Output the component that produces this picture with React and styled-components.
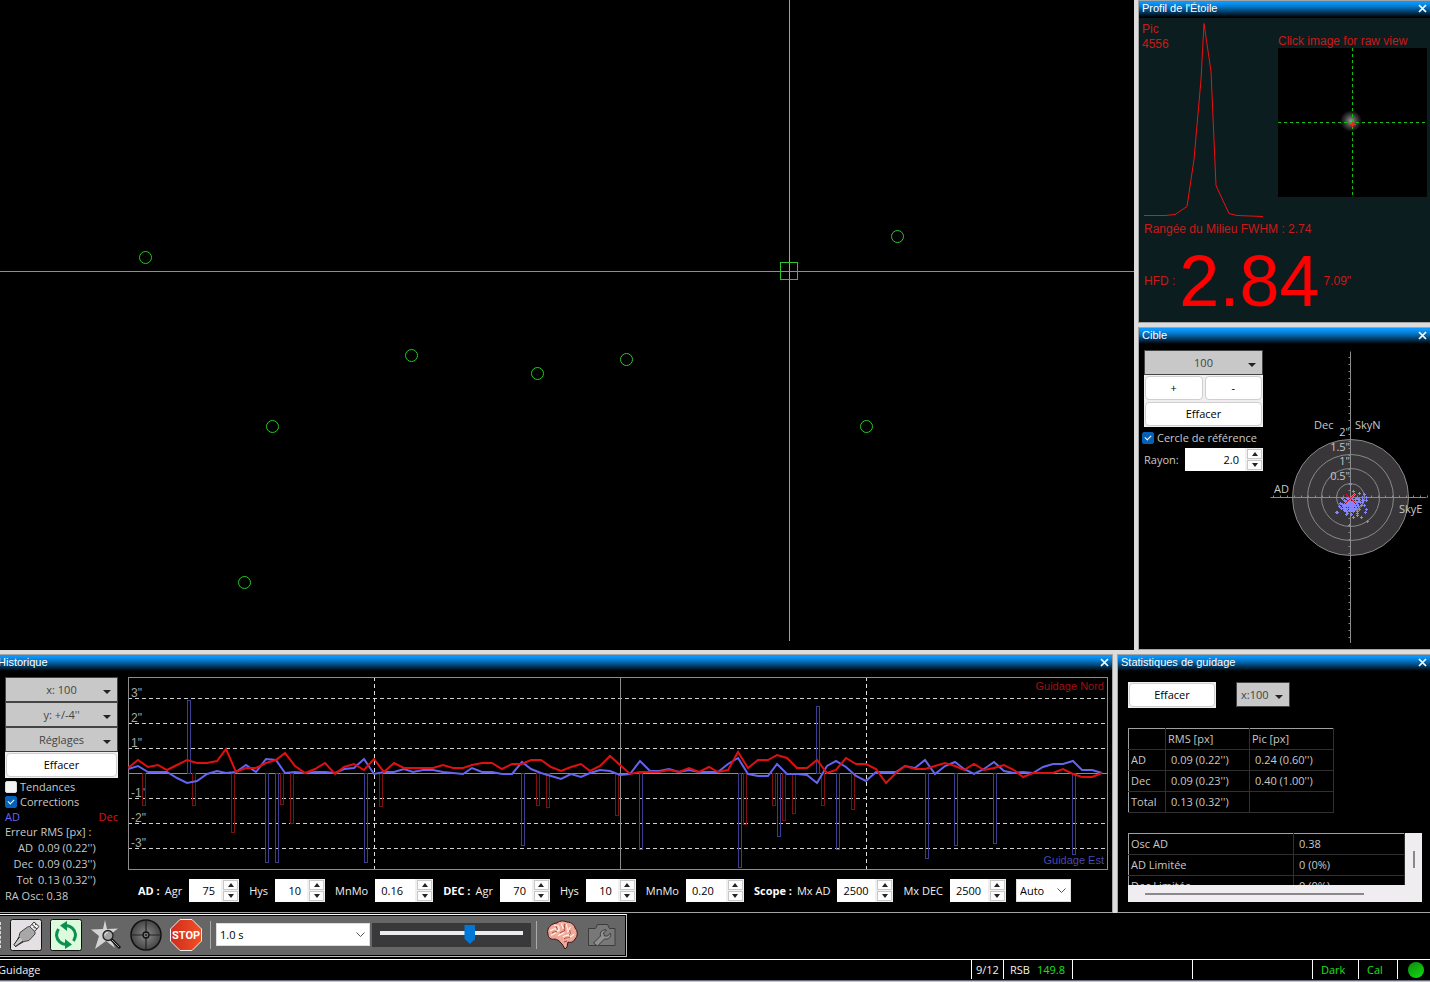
import styled, { createGlobalStyle } from "styled-components";

const GlobalStyle = createGlobalStyle`
  * {
    box-sizing: border-box;
  }
  body {
    margin: 0;
    background: #000;
    color: #c8c8c8;
    font-family: "Open Sans", "Noto Sans", sans-serif;
    font-size: 11px;
    line-height: 16px;
  }
  button, input, select {
    font: inherit;
    margin: 0;
    border-radius: 0;
  }
`;

const Window = styled.div`
  min-height: 100vh;
  display: flex;
  flex-direction: column;
  border-bottom: 1px solid #c4c4cc;
`;

const Docks = styled.div`
  flex: 1;
  display: flex;
  flex-direction: column;
  gap: 4px;
  background: #dcdcdc;
`;

const DockRow = styled.div`
  flex: ${(props) => (props.$grow ? 1 : "none")};
  display: flex;
  gap: 4px;
`;

const SideColumn = styled.div`
  width: 292px;
  display: flex;
  flex-direction: column;
  gap: 4px;
`;

const Sky = styled.svg`
  flex: 1;
  min-width: 0;
  background: #000;
`;

const PanelBox = styled.section`
  flex: ${(props) => (props.$width ? "none" : 1)};
  width: ${(props) => props.$width || "auto"};
  min-width: 0;
  display: flex;
  flex-direction: column;
  background: ${(props) => props.$bg || "#000"};
  border: 1px solid #a4a4a4;
  border-left-width: ${(props) => (props.$edge === "left" ? 0 : "1px")};
  border-right-width: ${(props) => (props.$edge === "left" ? "1px" : 0)};
`;

const TitleBar = styled.header`
  height: 17px;
  flex: none;
  display: flex;
  align-items: center;
  justify-content: space-between;
  padding: 0 3px 3px;
  padding-left: ${(props) => (props.$edge === "left" ? 0 : "3px")};
  text-indent: ${(props) => (props.$edge === "left" ? "-2px" : 0)};
  background: linear-gradient(#0a96fa 10%, #0574c4 35%, #000 95%);
`;

const Title = styled.h2`
  margin: 0;
  color: #fff;
  font-family: "Liberation Sans", Arial, sans-serif;
  font-size: 11px;
  font-weight: 400;
  line-height: 16px;
`;

const CloseButton = styled.button`
  width: 9px;
  height: 9px;
  padding: 0;
  border: 0;
  background: none;
  svg {
    display: block;
  }
`;

const Panel = ({ title, edge, bg, width, children }) => (
  <PanelBox $edge={edge} $bg={bg} $width={width}>
    <TitleBar $edge={edge}>
      <Title>{title}</Title>
      <CloseButton aria-label="Fermer">
        <svg width="9" height="9" viewBox="0 0 9 9">
          <path d="M1 1l7 7M8 1l-7 7" stroke="#fff" strokeWidth="1.7" />
        </svg>
      </CloseButton>
    </TitleBar>
    {children}
  </PanelBox>
);

/* shared controls */

const PushFrame = styled.button`
  display: flex;
  height: 26px;
  width: ${(props) => props.$width || "auto"};
  flex: ${(props) => (props.$grow ? 1 : "none")};
  padding: 1px;
  color: #000;
  background: #f0eef0;
  border: 0;
`;

const PushFace = styled.span`
  flex: 1;
  height: 24px;
  line-height: 22px;
  background: #fff;
  border: 1px solid #d0ced0;
  border-radius: 4px;
`;

const PushButton = ({ width, grow, children }) => (
  <PushFrame $width={width} $grow={grow}>
    <PushFace>{children}</PushFace>
  </PushFrame>
);

const MenuBox = styled.span`
  display: grid;
  align-items: center;
  width: ${(props) => props.$width || "auto"};
  height: 25px;
  background: #c8c8c8;
  border: 1px solid #444;
  svg {
    grid-area: 1 / 1;
    justify-self: end;
    margin: 5px 6px 0 0;
    pointer-events: none;
  }
`;

const MenuSelect = styled.select`
  grid-area: 1 / 1;
  width: 100%;
  height: 23px;
  appearance: none;
  border: 0;
  padding: 0 4px;
  background: none;
  color: #444;
  text-align: ${(props) => props.$align || "center"};
  text-align-last: ${(props) => props.$align || "center"};
`;

const MenuButton = styled.button`
  grid-area: 1 / 1;
  height: 23px;
  border: 0;
  padding: 0;
  background: none;
  color: #444;
`;

const Triangle = () => (
  <svg width="8" height="4" viewBox="0 0 8 4">
    <path d="M0 0h8L4 4z" fill="#222" />
  </svg>
);

const Menu = ({ label, value, width, align }) => (
  <MenuBox $width={width}>
    <MenuSelect aria-label={label} $align={align}>
      <option>{value}</option>
    </MenuSelect>
    <Triangle />
  </MenuBox>
);

const ComboBox = styled.span`
  display: grid;
  align-items: center;
  width: ${(props) => props.$width};
  height: 23px;
  background: #fff;
  border: 1px solid #ddd;
  svg {
    grid-area: 1 / 1;
    justify-self: end;
    margin-right: 4px;
    pointer-events: none;
  }
`;

const ComboSelect = styled.select`
  grid-area: 1 / 1;
  width: 100%;
  height: 21px;
  appearance: none;
  border: 0;
  padding: 0 3px;
  background: none;
  color: #000;
`;

const Combo = ({ label, value, width }) => (
  <ComboBox $width={width}>
    <ComboSelect aria-label={label}>
      <option>{value}</option>
    </ComboSelect>
    <svg width="9" height="6" viewBox="0 0 9 6">
      <path d="M.5 .5l4 4 4-4" fill="none" stroke="#555" />
    </svg>
  </ComboBox>
);

const SpinBox = styled.span`
  display: flex;
  width: ${(props) => props.$width};
  height: 23px;
  background: #f0f0f0;
`;

const SpinInput = styled.input`
  flex: 1;
  min-width: 0;
  padding: 0 6px;
  border: 0;
  background: #fff;
  color: #000;
  text-align: ${(props) => props.$align || "right"};
`;

const SpinArrows = styled.span`
  width: 18px;
  display: flex;
  flex-direction: column;
  gap: 1px;
  padding: 1px 1px 1px 2px;
`;

const SpinArrow = styled.button`
  flex: 1;
  display: flex;
  align-items: center;
  justify-content: center;
  padding: 0;
  background: #fdfdfd;
  border: 1px solid #c8c8c8;
`;

const Spin = ({ id, value, width, align }) => (
  <SpinBox $width={width}>
    <SpinInput id={id} defaultValue={value} $align={align} />
    <SpinArrows>
      <SpinArrow aria-label="Augmenter">
        <svg width="6" height="4" viewBox="0 0 6 4">
          <path d="M0 4h6L3 0z" fill="#222" />
        </svg>
      </SpinArrow>
      <SpinArrow aria-label="Diminuer">
        <svg width="6" height="4" viewBox="0 0 6 4">
          <path d="M0 0h6L3 4z" fill="#222" />
        </svg>
      </SpinArrow>
    </SpinArrows>
  </SpinBox>
);

const CheckLabel = styled.label`
  display: flex;
  align-items: center;
  gap: 3px;
  height: 15px;
  white-space: nowrap;
`;

const Check = styled.input`
  appearance: none;
  width: 12px;
  height: 12px;
  border-radius: 2px;
  background: #f4f4f4;
  border: 1px solid #ddd;
  display: grid;
  place-items: center;
  &:checked {
    background: #0560b8;
    border-color: #0560b8;
  }
  &:checked::after {
    content: "";
    width: 5px;
    height: 3px;
    margin-bottom: 2px;
    border-left: 1px solid #fff;
    border-bottom: 1px solid #fff;
    transform: rotate(-45deg);
  }
`;

/* star profile */

const ProfileBody = styled.div`
  padding: 0 3px;
  color: #cc1818;
  font-family: "Liberation Sans", Arial, sans-serif;
  font-size: 12px;
  text {
    fill: #cc1818;
  }
`;

const ProfileTop = styled.div`
  display: flex;
  justify-content: space-between;
`;

const StarView = styled.figure`
  margin: 16px 0 0;
  figcaption {
    line-height: 14px;
    white-space: nowrap;
  }
  svg {
    display: block;
    background: #000;
  }
`;

const FwhmLine = styled.p`
  margin: 1px 2px 0;
`;

const HfdLine = styled.p`
  display: flex;
  align-items: center;
  gap: 4px;
  margin: 4px 2px 0;
  strong {
    color: #f00;
    font-size: 72px;
    font-weight: 400;
    line-height: 80px;
  }
`;

const StarProfile = () => (
  <Panel title="Profil de l'Étoile" bg="#0b1d1f">
    <ProfileBody>
      <ProfileTop>
        <svg width="124" height="202" viewBox="0 0 124 202">
          <text x="0" y="15">Pic</text>
          <text x="0" y="30">4556</text>
          <path
            d="M2 197.5h21l10-1 12-8 7-47 7-80 3-56 7 48 5 114 13 28 8 2 26 1"
            fill="none"
            stroke="#f01010"
          />
        </svg>
        <StarView>
          <figcaption>Click image for raw view</figcaption>
          <svg width="149" height="149" viewBox="0 0 149 149">
            <defs>
              <radialGradient id="glow">
                <stop offset="0" stopColor="#999" />
                <stop offset=".5" stopColor="#444" />
                <stop offset="1" stopColor="#000" />
              </radialGradient>
            </defs>
            <circle cx="73" cy="73" r="11" fill="url(#glow)" />
            <path d="M0 74.5h149M74.5 0v149" stroke="#16c016" strokeDasharray="3 3" />
            <path d="M72 76.5h6M74.5 74v5" stroke="#e03020" />
          </svg>
        </StarView>
      </ProfileTop>
      <FwhmLine>Rangée du Milieu FWHM : 2.74</FwhmLine>
      <HfdLine>
        <span>HFD :</span>
        <strong>2.84</strong>
        <span>7.09"</span>
      </HfdLine>
    </ProfileBody>
  </Panel>
);

/* target */

const TargetBody = styled.div`
  flex: 1;
  display: flex;
  padding: 5px 2px 6px 5px;
`;

const TargetControls = styled.div`
  width: 119px;
  flex: none;
`;

const ZoomButtons = styled.div`
  display: flex;
`;

const CircleOption = styled.div`
  margin: 3px 0 3px -2px;
`;

const RadiusLine = styled.div`
  display: flex;
  align-items: center;
  justify-content: space-between;
`;

const TargetPlot = styled.svg`
  flex: 1;
  min-width: 0;
  font-size: 11px;
`;

// offsets of the guide samples from the lock position, in px
const samples = [
  [0, -13], [3, -6], [4, -3], [9, -4], [14, -3], [16, 0], [12, 0], [7, 1],
  [-8, 1], [-6, 3], [-3, 1], [2, 2], [5, 2], [9, 2], [13, 3], [16, 3],
  [-4, 4], [-1, 4], [1, 5], [3, 4], [6, 5], [10, 5], [12, 5], [-10, 6],
  [-8, 7], [-6, 7], [-4, 7], [-2, 6], [0, 7], [2, 7], [4, 7], [7, 7],
  [14, 8], [-11, 9], [-5, 9], [-3, 9], [-1, 9], [1, 9], [3, 9], [5, 9],
  [8, 9], [11, 8], [-9, 11], [-6, 11], [-3, 11], [0, 11], [2, 11], [4, 12],
  [6, 11], [9, 12], [16, 12], [-14, 15], [-13, 15], [-6, 13], [-4, 14],
  [-1, 13], [1, 13], [3, 14], [7, 14], [15, 15], [-3, 16], [-4, 17], [1, 17],
  [7, 16], [3, 20], [7, 18], [11, 20], [17, 24], [-1, 28], [-4, 5], [0, 1],
  [2, -1], [-1, 2], [0, 5], [-2, 4], [3, 6], [1, 7], [-2, 8], [0, 9],
  [-4, 12], [-7, 9], [5, 4], [8, 4], [12, 3],
];

const ticks = [...Array(20)].map((_, i) => (i + 1) * 7);

const Target = () => (
  <Panel title="Cible">
    <TargetBody>
      <TargetControls>
        <Menu label="Nombre de points" value="100" width="119px" />
        <ZoomButtons>
          <PushButton grow>+</PushButton>
          <PushButton grow>-</PushButton>
        </ZoomButtons>
        <PushButton width="119px">Effacer</PushButton>
        <CircleOption>
          <CheckLabel>
            <Check type="checkbox" defaultChecked />
            Cercle de référence
          </CheckLabel>
        </CircleOption>
        <RadiusLine>
          <label htmlFor="radius">Rayon:</label>
          <Spin id="radius" value="2.0" width="78px" />
        </RadiusLine>
      </TargetControls>
      <TargetPlot viewBox="-87 -147 165 293">
        <g transform="translate(.5 .5)" fill="none" stroke="#8a8a8a">
          <circle r="58" fill="#383639" />
          <circle r="43" />
          <circle r="29" />
          <circle r="14" />
          <path d="M-80 0H76M0-146V146" />
          {ticks.map((t) => (
            <path key={t} d={`M-2 ${t}h2M-2 ${-t}h2`} />
          ))}
          {ticks.slice(0, 11).map((t) => (
            <path key={t} d={`M${t}-2v2M${-t}-2v2`} />
          ))}
        </g>
        <g fill="#8484ff">
          {samples.map(([x, y], i) => (
            <path key={i} d={`M${x} ${y - 1}h1v1h1v1h-1v1h-1v-1h-1v-1h1z`} />
          ))}
        </g>
        <path d="M-4-3l9 9M5-3l-9 9" stroke="#e01030" />
        <g fill="#c8c8c8">
          <text x="-36" y="-68">Dec</text>
          <text x="5" y="-68">SkyN</text>
          <text x="-76" y="-4">AD</text>
          <text x="49" y="16">SkyE</text>
          <g textAnchor="end">
            <text x="0" y="-61">2"</text>
            <text x="0" y="-46">1.5"</text>
            <text x="0" y="-32">1"</text>
            <text x="0" y="-17">0.5"</text>
          </g>
        </g>
      </TargetPlot>
    </TargetBody>
  </Panel>
);

/* history */

const HistoryBody = styled.div`
  display: flex;
  gap: 10px;
  padding: 5px 4px 0 5px;
`;

const HistorySide = styled.div`
  width: 113px;
  flex: none;
  display: flex;
  flex-direction: column;
`;

const Checks = styled.div`
  margin-top: 1px;
`;

const AxisNames = styled.div`
  display: flex;
  justify-content: space-between;
  line-height: 15px;
`;

const AxisName = styled.span`
  color: ${(props) => props.color};
`;

const RmsLine = styled.div`
  display: flex;
  gap: 5px;
  white-space: nowrap;
  span:first-child {
    width: 28px;
    text-align: right;
  }
`;

const HistoryMain = styled.div`
  flex: 1;
  min-width: 0;
`;

const Graph = styled.svg`
  display: block;
  width: 100%;
  font-family: "Liberation Sans", Arial, sans-serif;
  font-size: 11px;
`;

const Settings = styled.div`
  display: flex;
  align-items: center;
  gap: 10px;
  margin: 9px 0 10px;
  padding-left: 10px;
  color: #f0f0f0;
  white-space: nowrap;
`;

const Setting = styled.div`
  display: flex;
  align-items: center;
  gap: 7px;
  strong {
    margin-right: -2px;
    color: #fff;
  }
`;

const STEP = 9.84;
const ZERO = 96;

const decTrace = [
  5, 13, 6, 8, 3, 8, 13, 10, 10, 12, 24, 1, 5, 5, 10, 13, 20, 7, 0, 4,
  10, -1, 6, 9, 3, 14, 1, 10, 5, 5, 5, 5, 8, 5, 5, 8, 10, 10, 4, 9,
  9, 13, 13, 6, 2, 6, 9, 2, 7, 17, 8, -1, 1, 1, 1, 3, 1, 5, 1, 6,
  1, 3, 21, 5, 13, 13, 18, 15, 5, 5, 13, 0, 3, 15, 9, 9, 4, -10, 0, 7,
  4, 4, 7, 10, 7, 3, 9, 3, 5, 8, 3, -4, 0, 0, 0, 4, -1, -4, -4, 0,
];

const raTrace = [
  4, 7, 1, 1, 1, -5, -10, -8, -1, 2, 0, 1, 8, 1, 14, 13, 0, 1, 0, 1,
  1, 0, 4, 5, 14, -1, 1, 1, 4, 1, 3, 3, 1, 0, -1, 5, 1, 1, -1, -1,
  11, 4, 0, -3, -6, -1, -4, 0, 3, 2, -2, -1, 12, 2, 2, 4, 1, 3, 1, 1,
  1, 9, 15, -1, -3, -3, 9, -1, -1, -2, -10, 7, 12, 6, -3, -8, 1, 1, 1, 7,
  5, 13, -1, 7, 11, 4, -1, 4, 11, 2, 0, 1, 0, 6, 9, 9, 12, 3, 3, 0,
];

// [sample, pulse length], negative pulses are drawn downwards
const raPulses = [
  [6, 73], [14, -89], [15, -89], [24, -89], [40, -72], [52, -76], [62, -94],
  [66, -63], [70, 67], [72, -76], [81, -85], [84, -72], [88, -70], [96, -81],
];

const decPulses = [
  [1, -32], [6, -32], [10, -59], [15, -31], [16, -50], [25, -33], [41, -32],
  [42, -34], [49, -42], [62, -51], [65, -32], [66, -47], [67, -40], [70, -32],
  [73, -36],
];

const trace = (values) =>
  values.map((v, i) => `${Math.round(i * STEP)},${ZERO - v}`).join(" ");

const Pulses = ({ items, shift, color }) => (
  <g fill="none" stroke={color}>
    {items.map(([i, v]) => (
      <rect
        key={i}
        x={Math.floor(i * STEP) + shift + 0.5}
        y={(v > 0 ? ZERO - v : ZERO) + 0.5}
        width="3"
        height={Math.abs(v)}
      />
    ))}
  </g>
);

const HistoryGraph = () => (
  <Graph viewBox="0 0 980 193">
    <path
      d="M0 21.5h980M0 46.5h980M0 71.5h980M0 121.5h980M0 146.5h980M0 171.5h980"
      stroke="#d0d0d0"
      strokeDasharray="4 3"
    />
    <path d="M246.5 0v193M738.5 0v193" stroke="#e0e0e0" strokeDasharray="4 3" />
    <path d="M0 96.5h980M492.5 0v193" stroke="#8c8c8c" />
    <rect x=".5" y=".5" width="979" height="192" fill="none" stroke="#8c8c8c" />
    <g fill="#a8a8a8" fontSize="12">
      <text x="3" y="20">3"</text>
      <text x="3" y="45">2"</text>
      <text x="3" y="70">1"</text>
      <text x="3" y="120">-1"</text>
      <text x="3" y="145">-2"</text>
      <text x="3" y="170">-3"</text>
    </g>
    <Pulses items={raPulses} shift={0} color="#3c3c90" />
    <Pulses items={decPulses} shift={5} color="#801010" />
    <polyline points={trace(raTrace)} fill="none" stroke="#6464f0" strokeWidth="2" />
    <polyline points={trace(decTrace)} fill="none" stroke="#e01010" strokeWidth="2" />
    <text x="976" y="13" textAnchor="end" fill="#a01010">Guidage Nord</text>
    <text x="976" y="187" textAnchor="end" fill="#4848b0">Guidage Est</text>
  </Graph>
);

const settings = [
  { id: "ra-agr", group: "AD :", label: "Agr", value: "75", width: "50px" },
  { id: "ra-hys", label: "Hys", value: "10", width: "50px" },
  { id: "ra-mnmo", label: "MnMo", value: "0.16", width: "58px", align: "left" },
  { id: "dec-agr", group: "DEC :", label: "Agr", value: "70", width: "50px" },
  { id: "dec-hys", label: "Hys", value: "10", width: "50px" },
  { id: "dec-mnmo", label: "MnMo", value: "0.20", width: "58px", align: "left" },
  { id: "mx-ra", group: "Scope :", label: "Mx AD", value: "2500", width: "56px", align: "left" },
  { id: "mx-dec", label: "Mx DEC", value: "2500", width: "56px", align: "left" },
];

const History = () => (
  <Panel title="Historique" edge="left">
    <HistoryBody>
      <HistorySide>
        <Menu label="Échelle x" value="x: 100" />
        <Menu label="Échelle y" value="y: +/-4''" />
        <MenuBox>
          <MenuButton>Réglages</MenuButton>
          <Triangle />
        </MenuBox>
        <PushButton>Effacer</PushButton>
        <Checks>
          <CheckLabel>
            <Check type="checkbox" />
            Tendances
          </CheckLabel>
          <CheckLabel>
            <Check type="checkbox" defaultChecked />
            Corrections
          </CheckLabel>
        </Checks>
        <AxisNames>
          <AxisName color="#6464ff">AD</AxisName>
          <AxisName color="#e01010">Dec</AxisName>
        </AxisNames>
        <div>Erreur RMS [px] :</div>
        <RmsLine><span>AD</span><span>0.09 (0.22'')</span></RmsLine>
        <RmsLine><span>Dec</span><span>0.09 (0.23'')</span></RmsLine>
        <RmsLine><span>Tot</span><span>0.13 (0.32'')</span></RmsLine>
        <div>RA Osc: 0.38</div>
      </HistorySide>
      <HistoryMain>
        <HistoryGraph />
        <Settings>
          {settings.map((s) => (
            <Setting key={s.id}>
              {s.group && <strong>{s.group}</strong>}
              <label htmlFor={s.id}>{s.label}</label>
              <Spin id={s.id} value={s.value} width={s.width} align={s.align} />
            </Setting>
          ))}
          <Combo label="Mode Dec" value="Auto" width="55px" />
        </Settings>
      </HistoryMain>
    </HistoryBody>
  </Panel>
);

/* statistics */

const StatsBody = styled.div`
  display: flex;
  flex-direction: column;
  gap: 20px;
  padding: 10px 8px 0 10px;
`;

const StatsBar = styled.div`
  display: flex;
  gap: 20px;
`;

const StatsTable = styled.table`
  width: ${(props) => props.$width};
  table-layout: fixed;
  border-collapse: collapse;
  th, td {
    height: 21px;
    padding: 0 2px;
    border: 1px solid #303030;
    font-weight: 400;
    text-align: left;
    white-space: nowrap;
  }
  td {
    padding-left: 5px;
  }
  tr > :first-child {
    border-left-color: #a0a0a0;
  }
  colgroup + * tr:first-child > * {
    border-top-color: #a0a0a0;
  }
`;

const ScrollArea = styled.div`
  display: grid;
  grid-template: 52px 17px / 1fr 17px;
  background: #f0edf0;
`;

const ScrollView = styled.div`
  overflow: hidden;
  background: #000;
`;

const ThumbY = styled.div`
  width: 2px;
  height: 17px;
  background: #8a888a;
  place-self: center;
`;

const ThumbX = styled.div`
  width: 79%;
  height: 2px;
  margin-left: 17px;
  background: #8a888a;
  align-self: center;
`;

const Stats = () => (
  <Panel title="Statistiques de guidage" width="313px">
    <StatsBody>
      <StatsBar>
        <PushButton width="88px">Effacer</PushButton>
        <Menu label="Échantillons" value="x:100" width="54px" align="left" />
      </StatsBar>
      <StatsTable $width="206px">
        <colgroup>
          <col width="37" />
          <col width="84" />
          <col width="84" />
        </colgroup>
        <thead>
          <tr><th /><th>RMS [px]</th><th>Pic [px]</th></tr>
        </thead>
        <tbody>
          <tr><th>AD</th><td>0.09 (0.22'')</td><td>0.24 (0.60'')</td></tr>
          <tr><th>Dec</th><td>0.09 (0.23'')</td><td>0.40 (1.00'')</td></tr>
          <tr><th>Total</th><td>0.13 (0.32'')</td><td /></tr>
        </tbody>
      </StatsTable>
      <ScrollArea>
        <ScrollView>
          <StatsTable $width="100%">
            <colgroup>
              <col width="165" />
              <col />
            </colgroup>
            <tbody>
              <tr><th>Osc AD</th><td>0.38</td></tr>
              <tr><th>AD Limitée</th><td>0 (0%)</td></tr>
              <tr><th>Dec Limitée</th><td>0 (0%)</td></tr>
            </tbody>
          </StatsTable>
        </ScrollView>
        <ThumbY />
        <ThumbX />
      </ScrollArea>
    </StatsBody>
  </Panel>
);

/* toolbar */

const ToolArea = styled.div`
  height: 46px;
  display: flex;
  padding: 1px 0 2px;
  background: #000;
`;

const Toolbar = styled.div`
  width: 627px;
  display: flex;
  align-items: center;
  padding: 0 8px 2px 0;
  background: #666;
  border: 1px solid #bbb;
  border-top-color: #fff;
  border-left: 0;
  box-shadow: inset -1px -1px #000, inset 0 1px #000;
`;

const Grip = styled.div`
  width: 1px;
  height: 26px;
  margin-right: 9px;
  border-left: 1px dashed #ddd;
`;

const ToolButtons = styled.div`
  display: flex;
  align-items: center;
  gap: 8px;
`;

const ToolButton = styled.button`
  width: 32px;
  height: 32px;
  padding: 0;
  border: 0;
  background: none;
  svg {
    display: block;
  }
`;

const Separator = styled.div`
  width: 1px;
  height: 28px;
  margin: 0 ${(props) => props.$after || "5px"} 0 ${(props) => props.$before || "5px"};
  background: #aaa;
`;

const SliderBox = styled.div`
  flex: 1;
  height: 24px;
  margin-left: 2px;
  padding: 0 8px;
  display: flex;
  align-items: center;
  background: #39393b;
`;

const Slider = styled.input`
  appearance: none;
  width: 100%;
  height: 20px;
  margin-bottom: 3px;
  background: none;
  &::-webkit-slider-runnable-track {
    height: 4px;
    background: #ececec;
  }
  &::-webkit-slider-thumb {
    appearance: none;
    width: 11px;
    height: 19px;
    margin-top: -6px;
    background: #0078d7;
    clip-path: polygon(0 0, 100% 0, 100% 72%, 50% 100%, 0 72%);
  }
`;

const CableIcon = () => (
  <svg width="32" height="32" viewBox="0 0 32 32">
    <rect x=".5" y=".5" width="31" height="31" rx="2" fill="#e4e0e4" stroke="#111" />
    <path d="M19.500 8l4.500-5 5 4.500-4.500 5z" fill="#f4f4f4" stroke="#333" />
    <path d="M22 5.500l5 4.500M25 5l1 1M23.500 8l1.500 1.500" stroke="#333" />
    <path d="M17.500 8l2-.5 5.500 5v2.500l-6 6.500-5 1-8.500 5-1-1 4.500-9 1-4z" fill="#a8a8a8" stroke="#444" />
    <path d="M9.500 18l-5.500 7.500 1.500 2 7.500-5.500" fill="#c8c8c8" stroke="#222" />
  </svg>
);

const LoopIcon = () => (
  <svg width="32" height="32" viewBox="0 0 32 32">
    <rect x=".5" y=".5" width="31" height="31" rx="2" fill="#dcfbdc" stroke="#111" />
    <g fill="none" stroke="#0a9050" strokeWidth="3">
      <path d="M15 6.500c6 0 10 4 10.500 9 0 3-1 5-2 6.500" />
      <path d="M17 25.500c-6 0-10-4-10.500-9 0-3 1-5 2-6.500" />
    </g>
    <path d="M10 6.500l7-4.500v10z M22 25.500l-7 4.500v-10z" fill="#0a9050" />
  </svg>
);

const StarIcon = () => (
  <svg width="32" height="32" viewBox="0 0 32 32">
    <path d="M15 1l2 9 11-.5-8.500 6.500 5.500 13-9-7-11 8 4-13-8-6.500 12-.5z" fill="#d4d4d4" />
    <path d="M21 20l9 9" stroke="#111" strokeWidth="3" />
    <path d="M22 21l7 7" stroke="#999" />
    <circle cx="18" cy="16.500" r="5" fill="#a4a4a4" stroke="#222" strokeWidth="1.300" />
    <path d="M15 16.500c0-2 1-3 3-3" stroke="#eee" fill="none" />
  </svg>
);

const GuideIcon = () => (
  <svg width="32" height="32" viewBox="0 0 32 32">
    <defs>
      <radialGradient id="scope">
        <stop offset="0" stopColor="#8a8a8a" />
        <stop offset="1" stopColor="#444" />
      </radialGradient>
    </defs>
    <circle cx="16" cy="16" r="15" fill="url(#scope)" stroke="#111" strokeWidth="1.500" />
    <path d="M16 1v30M1 16h30" stroke="#222" strokeWidth="1.200" />
    <circle cx="16" cy="16" r="3" fill="#777" stroke="#111" strokeWidth="1.300" />
    <circle cx="16" cy="16" r="1" fill="#222" />
  </svg>
);

const StopIcon = () => (
  <svg width="32" height="32" viewBox="0 0 32 32">
    <defs>
      <linearGradient id="stop" x1="0" x2="1">
        <stop offset="0" stopColor="#d02c1c" />
        <stop offset="1" stopColor="#f05024" />
      </linearGradient>
    </defs>
    <path d="M10 .5h12l9.500 9.500v12L22 31.500H10L.5 22V10z" fill="url(#stop)" stroke="#eee" />
    <text
      x="16"
      y="20"
      textAnchor="middle"
      fill="#fff"
      fontFamily="Roboto, sans-serif"
      fontWeight="700"
      fontSize="11"
    >
      STOP
    </text>
  </svg>
);

const BrainIcon = () => (
  <svg width="32" height="32" viewBox="0 0 32 32">
    <path d="M2 15C0 9 6 4 11 4c3-3 8-2 10-1 5 0 8 4 8 6 3 3 3 8 0 11-1 3-5 4-7 3l-1 5-2 2-3-5-2-2c-1-2-3-2-5-3-4 1-7-1-7-5z" fill="#f0a898" stroke="#3a1414" />
    <path d="M4 12c2-2 4-1 5-3M8 6c2 1 4 0 5 2s-2 3-1 5M16 4c-2 3 2 3 1 6M21 5c-2 2 2 4 0 6M25 8c-3 1-1 4-4 5M5 16c3 0 3-3 6-2M12 17c2-3 5-1 6-4M17 18c3-3 4 0 7-3M21 20c2-3 5-1 7-5M9 10c2 0 3 2 5 1" fill="none" stroke="#fff0e8" strokeWidth="1.300" />
    <path d="M6 14c2-1 3-2 5-1M10 7c0 2 2 2 1 4M19 5c-2 2 1 4-1 6M14 14c2-2 4-1 5-3M24 11c-1 2 2 3-1 5M18 20c2-2 3 0 6-2M18 23l3-1" fill="none" stroke="#a84840" />
  </svg>
);

const CameraIcon = () => (
  <svg width="32" height="32" viewBox="0 0 32 32">
    <path d="M2.500 9.500h7l2-4h10l2 4h5.500v17h-26.500z" fill="#787878" stroke="#3c3c3c" />
    <path d="M7.500 24l7-7c-1-4 2-7 6-6l-3 3 1 3 3 0 3-3c1 4-2 7-6 6l-7 7z" fill="#909090" stroke="#3c3c3c" />
  </svg>
);

const Tools = () => (
  <ToolArea>
    <Toolbar>
      <Grip />
      <ToolButtons>
        <ToolButton aria-label="Connecter"><CableIcon /></ToolButton>
        <ToolButton aria-label="Boucle"><LoopIcon /></ToolButton>
        <ToolButton aria-label="Sélection de l'étoile"><StarIcon /></ToolButton>
        <ToolButton aria-label="Guider"><GuideIcon /></ToolButton>
        <ToolButton aria-label="Arrêter"><StopIcon /></ToolButton>
      </ToolButtons>
      <Separator $before="8px" />
      <Combo label="Pose" value="1.0 s" width="154px" />
      <SliderBox>
        <Slider type="range" aria-label="Gamma" min="0" max="100" defaultValue="64" />
      </SliderBox>
      <Separator $after="9px" />
      <ToolButtons>
        <ToolButton aria-label="Avancé"><BrainIcon /></ToolButton>
        <ToolButton aria-label="Caméra"><CameraIcon /></ToolButton>
      </ToolButtons>
    </Toolbar>
  </ToolArea>
);

/* status bar */

const StatusBar = styled.footer`
  height: 22px;
  display: flex;
  border-top: 1px solid #fff;
  border-bottom: 1px solid #6c6c7c;
  color: #f0f0f0;
  line-height: 20px;
`;

const StatusText = styled.div`
  flex: 1;
  text-indent: -2px;
`;

const StatusCell = styled.div`
  width: ${(props) => props.$width};
  height: 19px;
  padding-left: ${(props) => props.$pad || "4px"};
  display: flex;
  align-items: center;
  gap: 7px;
  border-left: 1px solid #fff;
`;

const Good = styled.span`
  color: #1ee01e;
`;

const Lamp = styled.span`
  width: 16px;
  height: 16px;
  border-radius: 50%;
  background: linear-gradient(150deg, #0a8c0a, #14dc14);
`;

const Status = () => (
  <StatusBar>
    <StatusText>Guidage</StatusText>
    <StatusCell $width="32px">9/12</StatusCell>
    <StatusCell $width="69px" $pad="6px">
      RSB <Good>149.8</Good>
    </StatusCell>
    <StatusCell $width="120px" />
    <StatusCell $width="120px" />
    <StatusCell $width="46px" $pad="8px"><Good>Dark</Good></StatusCell>
    <StatusCell $width="39px" $pad="8px"><Good>Cal</Good></StatusCell>
    <StatusCell $width="33px" $pad="10px"><Lamp /></StatusCell>
  </StatusBar>
);

const stars = [
  [145, 257], [897, 236], [411, 355], [537, 373],
  [626, 359], [866, 426], [272, 426], [244, 582],
];

const App = () => {
  return (
    <Window>
      <GlobalStyle />
      <Docks>
        <DockRow $grow>
          <Sky viewBox="0 0 1134 650" preserveAspectRatio="xMinYMin slice">
            <path d="M789.5 0v641" stroke="#a0a0a0" />
            <path d="M0 271.500h1134" stroke="#3cc83c" />
            <g fill="none" stroke="#28c828">
              <rect x="780.5" y="262.5" width="17" height="17" />
              {stars.map(([x, y]) => (
                <circle key={x} cx={x + 0.5} cy={y + 0.5} r="6" />
              ))}
            </g>
          </Sky>
          <SideColumn>
            <StarProfile />
            <Target />
          </SideColumn>
        </DockRow>
        <DockRow>
          <History />
          <Stats />
        </DockRow>
      </Docks>
      <Tools />
      <Status />
    </Window>
  );
};

export default App;
